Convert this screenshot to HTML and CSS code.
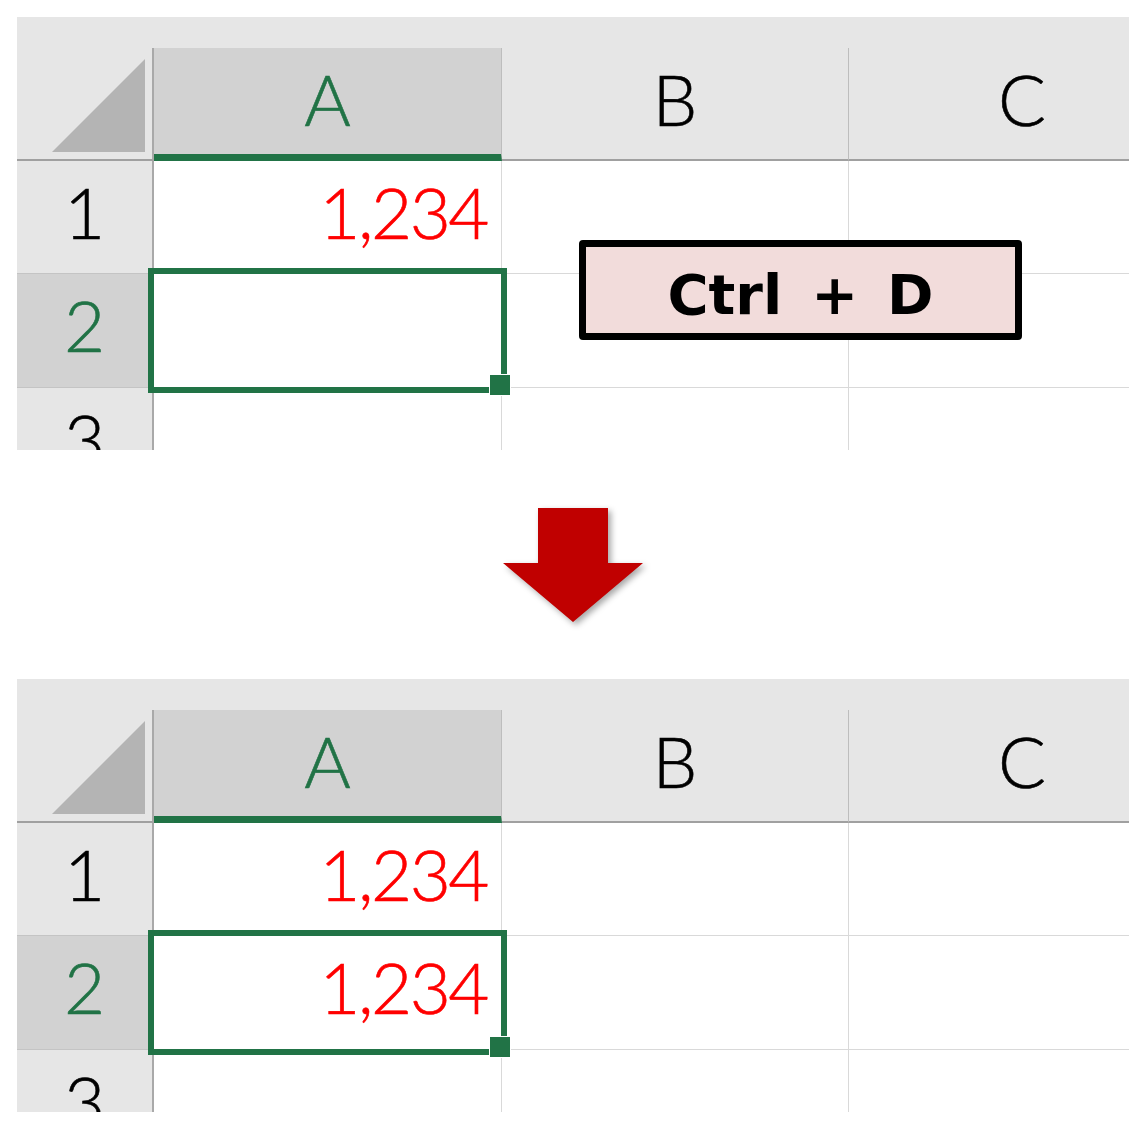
FILE: index.html
```html
<!DOCTYPE html>
<html lang="ja">
<head>
<meta charset="utf-8">
<title>Ctrl + D</title>
<link rel="stylesheet" href="styles.css">
</head>
<body>
<div class="page">
  <section class="sheet">
    <div class="strip"></div>
    <div class="grid">
      <div class="corner"><span class="tri"></span></div>
      <div class="colh sel">A</div>
      <div class="colh">B</div>
      <div class="colh">C</div>

      <div class="rowh">1</div>
      <div class="cell num">1,234</div>
      <div class="cell"></div>
      <div class="cell"></div>

      <div class="rowh sel">2</div>
      <div class="cell"></div>
      <div class="cell"></div>
      <div class="cell"></div>

      <div class="rowh last">3</div>
      <div class="cell last"></div>
      <div class="cell last"></div>
      <div class="cell last"></div>
    </div>
    <div class="selection"></div>
    <div class="handle"></div>
    <div class="shortcut">Ctrl  +  D</div>
  </section>

  <div class="arrow-wrap">
    <svg class="arrow" width="140" height="114" viewBox="0 0 140 114">
      <polygon points="35,0 105,0 105,55 140,55 70,114 0,55 35,55" fill="#c00000"/>
    </svg>
  </div>

  <section class="sheet">
    <div class="strip"></div>
    <div class="grid">
      <div class="corner"><span class="tri"></span></div>
      <div class="colh sel">A</div>
      <div class="colh">B</div>
      <div class="colh">C</div>

      <div class="rowh">1</div>
      <div class="cell num">1,234</div>
      <div class="cell"></div>
      <div class="cell"></div>

      <div class="rowh sel">2</div>
      <div class="cell num">1,234</div>
      <div class="cell"></div>
      <div class="cell"></div>

      <div class="rowh last">3</div>
      <div class="cell last"></div>
      <div class="cell last"></div>
      <div class="cell last"></div>
    </div>
    <div class="selection"></div>
    <div class="handle"></div>
  </section>
</div>
</body>
</html>
```

FILE: styles.css
```css
* { box-sizing: border-box; }

html, body {
  margin: 0;
  padding: 0;
  background: #fff;
}

.page {
  padding: 17px 0 0 17px;
  display: flex;
  flex-direction: column;
  width: 1146px;
}

.sheet {
  position: relative;
  width: 1112px;
  height: 433px;
  overflow: hidden;
  background: #fff;
  font-family: "Lato", "Noto Sans", sans-serif;
  font-weight: 300;
}

.strip {
  height: 31px;
  background: #e6e6e6;
}

.grid {
  display: grid;
  grid-template-columns: 137px 348px 347px 347px;
  grid-template-rows: 113px 113px 114px 62px;
}

.grid > div {
  font-size: 71px;
  line-height: 71px;
  padding-top: 15px;
  color: #000;
  white-space: nowrap;
  -webkit-text-stroke: 0.6px currentColor;
}

.corner {
  background: #e6e6e6;
  border-right: 2px solid #a9a9a9;
  border-bottom: 2px solid #a0a0a0;
  display: flex;
  justify-content: flex-end;
  align-items: flex-end;
  padding: 0 7px 7px 0 !important;
}

.tri {
  display: block;
  width: 93px;
  height: 93px;
  background: #b4b4b4;
  clip-path: polygon(100% 0, 100% 100%, 0 100%);
}

.colh {
  background: #e6e6e6;
  border-right: 1px solid #bdbdbd;
  border-bottom: 2px solid #a0a0a0;
  text-align: center;
}

.colh.sel {
  background: #d2d2d2;
  color: #217346 !important;
  border-bottom: 7px solid #217346;
}

.rowh {
  background: #e6e6e6;
  border-right: 2px solid #a9a9a9;
  border-bottom: 1px solid #c4c4c4;
  text-align: center;
}

.rowh.sel {
  background: #d2d2d2;
  color: #217346 !important;
}

.cell {
  border-right: 1px solid #d9d9d9;
  border-bottom: 1px solid #d9d9d9;
}

.grid > .last {
  border-bottom: none;
}

.grid > .num {
  color: #ff0000;
  text-align: right;
  padding-right: 14px;
  letter-spacing: -2.5px;
}

.selection {
  position: absolute;
  left: 131px;
  top: 251px;
  width: 359px;
  height: 125px;
  border: 6px solid #217346;
}

.handle {
  position: absolute;
  left: 472px;
  top: 357px;
  width: 22px;
  height: 22px;
  background: #217346;
  border: 1px solid #fff;
}

.shortcut {
  position: absolute;
  left: 562px;
  top: 223px;
  width: 443px;
  height: 100px;
  border: 7px solid #000;
  border-radius: 4px;
  background: #f2dcdb;
  display: flex;
  align-items: center;
  justify-content: center;
  font-family: "DejaVu Sans", "Noto Sans", sans-serif;
  font-weight: 700;
  font-size: 56px;
  line-height: 1;
  color: #000;
  white-space: pre;
  word-spacing: -5px;
  padding-top: 10px;
}

.arrow-wrap {
  width: 1112px;
  padding: 58px 0 57px;
  display: flex;
  justify-content: center;
}

.arrow {
  display: block;
  filter: drop-shadow(3px 3px 3px rgba(0, 0, 0, 0.35));
}
```
